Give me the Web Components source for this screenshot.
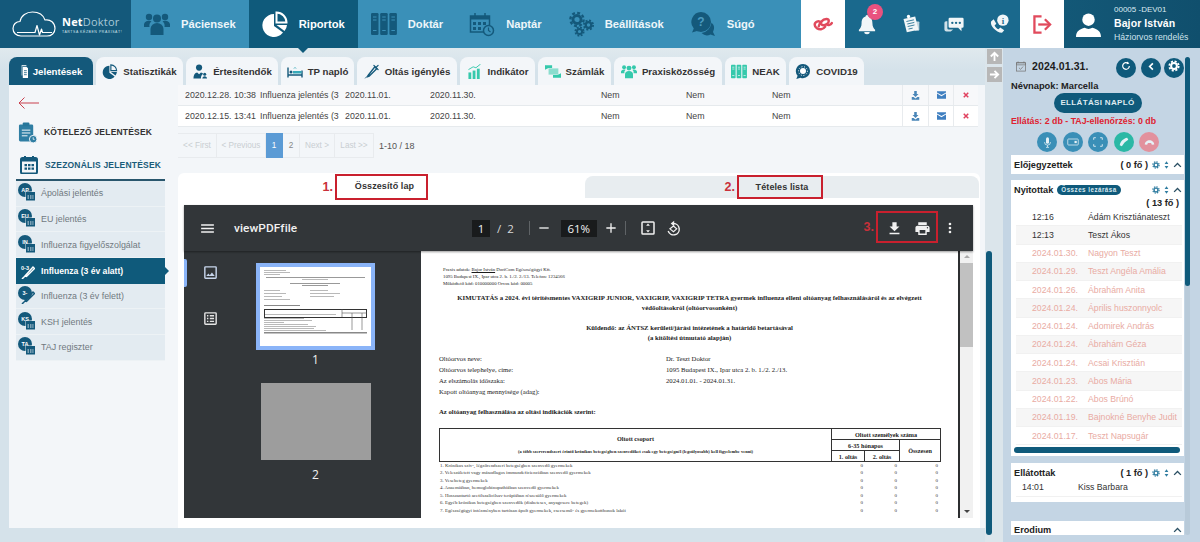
<!DOCTYPE html>
<html lang="hu">
<head>
<meta charset="utf-8">
<title>NetDoktor</title>
<style>
    html, body { margin: 0; height: 542px; overflow: hidden; background: #d5e2ea; font-family: "Liberation Sans", Arial, sans-serif; }
</style>
</head>
<body>
<nd-app>
    <nd-header slot="header"></nd-header>

    <nd-tabs slot="tabs">
        <nd-tab icon="docs" w="84" active>Jelentések</nd-tab>
        <nd-tab icon="pie" w="87">Statisztikák</nd-tab>
        <nd-tab icon="person" w="92">Értesítendők</nd-tab>
        <nd-tab icon="bed" w="73">TP napló</nd-tab>
        <nd-tab icon="syringe" w="100">Oltás igénylés</nd-tab>
        <nd-tab icon="bars" w="75" teal>Indikátor</nd-tab>
        <nd-tab icon="bill" w="73" teal>Számlák</nd-tab>
        <nd-tab icon="users" w="108" teal>Praxisközösség</nd-tab>
        <nd-tab icon="binders" w="61" teal>NEAK</nd-tab>
        <nd-tab icon="virus" w="75">COVID19</nd-tab>
    </nd-tabs>

    <nd-sidemenu slot="menu"></nd-sidemenu>

    <div slot="content">
        <nd-report-table></nd-report-table>
        <nd-pager></nd-pager>
        <nd-pdf-card></nd-pdf-card>
    </div>

    <nd-gutter slot="gutter"></nd-gutter>
    <nd-sidebar slot="sidebar"></nd-sidebar>
</nd-app>

<script>
const ICONS = {
    cloud: ['0 0 44 26', `<g fill="none" stroke="currentColor" stroke-width="1.2" stroke-linejoin="round"><path d="M9 25C4 25 1 21.500 1 17.500 1 13.500 4 10.500 8 10.500 9 4.500 14.500 1 20.500 1 27 1 31.500 4.500 33 9 38.500 8 43 12 43 17.500 43 22 39.500 25 35 25Z"/><path d="M5 21.500H23L25 14.500 27.500 24 29.500 18 30.500 21.500H40"/></g>`],
    users: ['0 0 26 24', `<circle cx="13" cy="6.500" r="4"/><circle cx="5" cy="5" r="3.200"/><circle cx="21" cy="5" r="3.200"/><path d="M6.500 23v-6a6.500 6 0 0 1 13 0v6z"/><path d="M0 15v-3a5 4 0 0 1 7.500-2.700 6 6 0 0 0-2 5.700z"/><path d="M26 15v-3a5 4 0 0 0-7.500-2.700 6 6 0 0 1 2 5.700z"/>`],
    pie: ['0 0 26 26', `<path d="M12 3A11.500 11.500 0 1 0 21 21.500L12 15z"/><path d="M14.500 1.500A10 10 0 0 1 24.500 11.500H14.500z" fill="none" stroke="currentColor" stroke-width="2"/><path d="M14.500 14H25A11 11 0 0 1 22.500 20z"/>`],
    binders: ['0 0 26 24', `<g><rect x="0" y="1" width="7.500" height="22" rx="1.200"/><rect x="9.200" y="1" width="7.500" height="22" rx="1.200"/><rect x="18.400" y="1" width="7.500" height="22" rx="1.200"/></g><g fill="none" stroke="var(--cut,#3a90b8)" stroke-width="1.100"><path d="M2 5h3.500M2 8h3.500M2 18.500h3.500M11.200 5h3.500M11.200 8h3.500M11.200 18.500h3.500M20.400 5h3.500M20.400 8h3.500M20.400 18.500h3.500"/></g>`],
    calclock: ['0 0 26 26', `<g fill="none" stroke="currentColor" stroke-width="1.500"><path d="M15 21H1.500V5h19v9"/><path d="M6 2v5M16 2v5"/><circle cx="19.500" cy="19.500" r="5"/><path d="M19.500 16.500v3l2 1.500" stroke-width="1.200"/></g><path d="M1.500 5h19v3.500h-19z"/><path d="M4 11h3v3H4zM9 11h3v3H9zM14 11h3v3h-3zM4 16h3v3H4zM9 16h3v3H9z"/>`],
    gears: ['0 0 26 26', `<g fill="none" stroke="currentColor"><circle cx="9" cy="8.500" r="4" stroke-width="2.800"/><circle cx="9" cy="8.500" r="6.600" stroke-width="2.400" stroke-dasharray="2.900 2.280"/><circle cx="20.500" cy="14" r="2.800" stroke-width="2.200"/><circle cx="20.500" cy="14" r="4.600" stroke-width="1.800" stroke-dasharray="2 1.610"/><circle cx="11.500" cy="20.500" r="2.600" stroke-width="2"/><circle cx="11.500" cy="20.500" r="4.200" stroke-width="1.700" stroke-dasharray="1.900 1.400"/></g>`],
    help: ['0 0 26 26', `<path d="M11 1a10 10 0 0 1 0 20c-1.500 0-3-.300-4-.9L2 21.500l1.800-4A10 10 0 0 1 11 1z"/><path d="M21.500 11.500a8 8 0 0 1 1.500 9.500l2 4-4.500-1.500a8 8 0 0 1-9-1.500 11.500 11.500 0 0 0 10-10.500z"/><text x="11" y="15" text-anchor="middle" font-size="12" font-family="Liberation Sans" fill="#4b9bc0">?</text>`],
    clover: ['0 0 22 14', `<g fill="none" stroke="currentColor" stroke-width="2.600" stroke-linecap="round"><path d="M8.500 5.500C6 3 1.800 4.500 1.800 7.800c0 3 3.700 5 6.700 4.700 2-.2 3.500-1.500 4.300-2.700"/><path d="M6 9.500C6.500 6 10 2 14 1.800c3.500-.2 3 3.700 .5 5.200-2 1.200-4.500 1.300-5.500 .5"/><path d="M14.500 7.500c1.500 1 4 .5 5.200-1.500"/></g>`],
    bell: ['0 0 20 24', `<path d="M10 2a1.600 1.600 0 0 1 1.600 1.700C15 4.600 16 8 16 11c0 4 1.500 6 3 7.500v1.500H1v-1.500C2.500 17 4 15 4 11c0-3 1-6.400 4.400-7.300A1.600 1.600 0 0 1 10 2z"/><path d="M7 21h6a3 2.500 0 0 1-6 0z"/>`],
    note: ['0 0 24 24', `<path d="M3 6l14-3 4 16-14 3z"/><circle cx="9" cy="3" r="2" fill="#fff"/><path d="M6.500 9l9-2M7.500 12l9-2M8 15l9-2M9 18l5-1" stroke="#1b6a8e" stroke-width="1" fill="none"/><rect x="16" y="9" width="6" height="11" rx="1" opacity=".75"/>`],
    chat: ['0 0 24 20', `<path d="M7 2h15a1.500 1.500 0 0 1 1.500 1.500v9A1.500 1.500 0 0 1 22 14h-1v4l-4-4H7a1.500 1.500 0 0 1-1.500-1.500v-9A1.500 1.500 0 0 1 7 2z"/><path d="M4 6v8.500A1.500 1.500 0 0 0 5.500 16H11l-3 2.500H3A2.500 2.500 0 0 1 .5 16V8A2 2 0 0 1 2.500 6z" opacity=".85"/><g fill="#1b6a8e"><circle cx="10" cy="8" r="1.400"/><circle cx="14.500" cy="8" r="1.400"/><circle cx="19" cy="8" r="1.400"/></g>`],
    phoneinfo: ['0 0 24 24', `<path d="M3.500 8.500l3-2.500 3 5-2 2c1 2 2.500 3.500 4.500 4.500l2-2 4.500 3-2.500 3C9 21 2 13 3.500 8.500z"/><circle cx="17" cy="7" r="6.500"/><text x="17" y="11" text-anchor="middle" font-size="10" font-weight="bold" font-family="Liberation Serif" fill="#1b6a8e">i</text>`],
    logout: ['0 0 20 20', `<g fill="none" stroke="currentColor" stroke-width="2.400"><path d="M9 1.500H1.500v17H9"/><path d="M5.500 10H17" /><path d="M12.500 4.500L18 10l-5.500 5.500"/></g>`],
    avatar: ['0 0 26 26', `<circle cx="13" cy="8" r="6.500"/><path d="M0 26c0-6 4-8 9-9.500 2.500 1.500 5.500 1.500 8 0 5 1.500 9 3.500 9 9.500z"/>`],
    docs: ['0 0 10 16', `<path d="M2 0h6v1H3v12H2z" opacity=".8"/><path d="M3.500 2H8l2 2v12H3.500z"/><path d="M5 7h3.500M5 9.500h3.500M5 12h3.500" stroke="#145e80" stroke-width="1" fill="none"/>`],
    person: ['0 0 16 16', `<circle cx="7" cy="3.800" r="3.300"/><path d="M1 15.500c0-4 1.500-6 4-6.500l2 2 2-2c1 .2 2 .8 2.500 1.500-1.500 1-2.500 2.500-2.500 5z"/><path d="M10.500 15.500c0-1.500 1-2.500 2.500-2.500s2.500 1 2.500 2.500z"/><circle cx="13" cy="11" r="1.600"/>`],
    bed: ['0 0 16 14', `<path d="M1 3v10M15 6v7M1 10.500h14" stroke="currentColor" stroke-width="1.400" fill="none"/><circle cx="4" cy="7.500" r="1.500"/><path d="M6 9V6.500h8.500V9z" fill="#36a9b8"/><path d="M7 4l1-1 1 1" stroke="#36a9b8" fill="none"/>`],
    syringe: ['0 0 16 16', `<g stroke="currentColor" fill="none" stroke-linecap="round"><path d="M1 15l4-4" stroke-width="1"/><path d="M4 12L11 3l2 2-8 8-1.500.5z" stroke-width="1.500"/><path d="M10 1.500l4.500 4.500M12.500 3.500l2-2" stroke-width="1.300"/></g>`],
    bars: ['0 0 16 16', `<rect x="1" y="9" width="3" height="7"/><rect x="5.500" y="7" width="3" height="9"/><rect x="10" y="5" width="3" height="11"/><path d="M1 6l5-3 3 1 5-4" stroke="currentColor" fill="none"/>`],
    bill: ['0 0 18 16', `<rect x="4" y="4.500" width="11" height="7" opacity=".55"/><path d="M0 1h8v3H1zM18 15h-9v-3h8z"/><path d="M0 1l4 3-4 2zM18 15l-4-3 4-2z"/>`],
    virus: ['0 0 18 18', `<path d="M9 0a8.500 8.500 0 0 1 0 17c-1 0-2-.200-3-.600L1 18l1.500-4A8.500 8.500 0 0 1 9 0z"/><circle cx="9" cy="8.500" r="3.600" fill="#fff"/><circle cx="9" cy="8.500" r="5.300" fill="none" stroke="#fff" stroke-width="1.200" stroke-dasharray="1.200 2"/>`],
    clipclock: ['0 0 20 22', `<rect x="1" y="2.500" width="15" height="18" rx="1.500"/><rect x="5" y="0.500" width="7" height="4" rx="1" fill="#27779b"/><path d="M4 8.500h9M4 11.500h9M4 14.500h6" stroke="#fff" fill="none"/><circle cx="16" cy="18" r="4" fill="#2f7ea3" stroke="#f3f6f9"/><path d="M16 16v2.200h1.500" stroke="#fff" stroke-width=".8" fill="none"/>`],
    calendar: ['0 0 18 18', `<path d="M4 0h2v3H4zM12 0h2v3h-2z"/><rect x="1" y="2" width="16" height="15.500" rx="1.500" fill="none" stroke="currentColor" stroke-width="2"/><path d="M1 2h16v3.500H1z"/><path d="M4.500 8h2.500v2.200H4.500zM8 8h2.500v2.200H8zM11.500 8H14v2.200h-2.500zM4.500 11.500h2.500v2.200H4.500zM8 11.500h2.500v2.200H8zM11.500 11.500H14v2.200h-2.500z"/>`],
    back: ['0 0 21 12', `<path d="M21 6H1M6.500.500L1 6l5.500 5.500" fill="none" stroke="currentColor" stroke-width="1"/>`],
    tray: ['0 0 12 12', `<path d="M4.300 0h3.400v4h2.300L6 8 2 4h2.300zM1 8h2.500L6 10l2.500-2H11v3.500H1z"/>`],
    mail: ['0 0 12 10', `<path d="M0 0h12v1.500L6 5 0 1.500z"/><path d="M0 3l6 3.500L12 3v7H0z"/>`],
    cross: ['0 0 8 8', `<path d="M1 1l6 6M7 1L1 7" stroke="currentColor" stroke-width="2" fill="none"/>`],
    menu: ['0 0 24 24', `<path d="M3 18h18v-2H3zM3 13h18v-2H3zM3 6v2h18V6z"/>`],
    plus: ['0 0 24 24', `<path d="M19 13h-6v6h-2v-6H5v-2h6V5h2v6h6z"/>`],
    minus: ['0 0 24 24', `<path d="M19 13H5v-2h14z"/>`],
    fit: ['0 0 24 24', `<path d="M19 3H5a2 2 0 0 0-2 2v14a2 2 0 0 0 2 2h14a2 2 0 0 0 2-2V5a2 2 0 0 0-2-2zm0 16H5V5h14z"/><path d="M12 6l2.500 3h-5zM12 18l2.500-3h-5z"/>`],
    rotate: ['0 0 24 24', `<g fill="none" stroke="currentColor" stroke-width="2"><path d="M12 5a8 8 0 1 1-7.500 10.500"/><path d="M12 8.500l-5 4 5 4 4.500-4z" stroke-width="1.700"/></g><path d="M13 1v8L8 5z"/>`],
    download: ['0 0 24 24', `<path d="M19 9h-4V3H9v6H5l7 7 7-7zM5 18v2h14v-2z"/>`],
    print: ['0 0 24 24', `<path d="M19 8H5c-1.660 0-3 1.340-3 3v6h4v4h12v-4h4v-6c0-1.660-1.340-3-3-3zm-3 11H8v-5h8zm3-7c-.550 0-1-.450-1-1s.450-1 1-1 1 .450 1 1-.450 1-1 1zm-1-9H6v4h12z"/>`],
    dots: ['0 0 24 24', `<path d="M12 8a2 2 0 1 0 0-4 2 2 0 0 0 0 4zm0 2a2 2 0 1 0 0 4 2 2 0 0 0 0-4zm0 6a2 2 0 1 0 0 4 2 2 0 0 0 0-4z"/>`],
    image: ['0 0 24 24', `<path d="M19 5v14H5V5zm0-2H5a2 2 0 0 0-2 2v14a2 2 0 0 0 2 2h14a2 2 0 0 0 2-2V5a2 2 0 0 0-2-2z"/><path d="M14 12l-3 3.900-2-2.500L6 17h12z"/>`],
    outline: ['0 0 24 24', `<path d="M19 3H5a2 2 0 0 0-2 2v14a2 2 0 0 0 2 2h14a2 2 0 0 0 2-2V5a2 2 0 0 0-2-2zm0 16H5V5h14z"/><path d="M7 7h2v2H7zM11 7h6v2h-6zM7 11h2v2H7zM11 11h6v2h-6zM7 15h2v2H7zM11 15h6v2h-6z"/>`],
    refresh: ['0 0 12 12', `<path d="M10 6a4 4 0 1 1-1.300-3" fill="none" stroke="currentColor" stroke-width="1.400"/><path d="M7.500 0.500L10 3 6.800 4z"/>`],
    chevleft: ['0 0 12 12', `<path d="M7.500 2.500L4 6l3.500 3.500" fill="none" stroke="currentColor" stroke-width="1.800"/>`],
    gear: ['0 0 12 12', `<circle cx="6" cy="6" r="2.900" fill="none" stroke="currentColor" stroke-width="2"/><circle cx="6" cy="6" r="4.700" fill="none" stroke="currentColor" stroke-width="1.800" stroke-dasharray="2.100 1.590"/>`],
    updown: ['0 0 8 12', `<path d="M4 0l3 4.500H1zM4 12L1 7.500h6z"/>`],
    chevup: ['0 0 12 8', `<path d="M1.500 6.500L6 2l4.500 4.500" fill="none" stroke="currentColor" stroke-width="1.800"/>`],
    mic: ['0 0 12 14', `<rect x="4" y="0" width="4" height="8.500" rx="2"/><path d="M2 6.500a4 4 0 0 0 8 0M6 10.500v2.500M4 13.500h4" fill="none" stroke="currentColor"/>`],
    video: ['0 0 16 12', `<rect x="1" y="2" width="14" height="8" rx="1" fill="none" stroke="currentColor"/><rect x="10" y="4.500" width="3" height="3"/>`],
    full: ['0 0 14 14', `<path d="M1 4V1h3M10 1h3v3M13 10v3h-3M4 13H1v-3" fill="none" stroke="currentColor" stroke-width="1.200"/>`],
    phone: ['0 0 14 14', `<path d="M11.500 1l1.500 3-3 2C8.500 7 7 8.500 6 10l-2 3-3-1.500C2 6 6 2 11.500 1z"/>`],
    hangup: ['0 0 14 14', `<path d="M1 9.500C1 6 4 4 7 4s6 2 6 5.500l-3 .5-1-2.500H5L4 10z"/>`],
    datebox: ['0 0 12 12', `<path d="M2.500 0v2M9.500 0v2" stroke="currentColor" fill="none"/><rect x=".6" y="1.500" width="10.800" height="10" fill="none" stroke="currentColor" stroke-width=".9"/><path d="M.6 1.500h10.800v2.500H.6zM3.500 7.500l2 2 3-3.500" fill="none" stroke="currentColor" stroke-width=".9"/>`]
}

// small bubble with a label + calendar, used in the left menu
function menuGlyph(label, kind) {
    const tail = kind === 'syringe'
        ? `<path d="M7 15l8-9 1.500 1.500-8 8zM4 18l3-3" stroke="currentColor" fill="none" stroke-width="1.500"/>`
        : `<rect x="7.500" y="8.500" width="9.500" height="9" fill="#e3ebf1"/><rect x="8" y="9" width="9" height="8.500" fill="currentColor"/><path d="M9.500 13h1.500M12 13h1.500M14.300 13h1.200M9.500 15h1.500M12 15h1.500M14.300 15h1.200" stroke="#e3ebf1" fill="none"/>`
    const bubble = kind === 'syringe' && label === '0-3' ? '' : `<circle cx="7" cy="7" r="7"/>`
    const colour = bubble ? '#fff' : 'currentColor'
    return `<svg viewBox="0 0 17 18" width="17" height="18" fill="currentColor">${bubble}<text x="7" y="8.800" text-anchor="middle" font-size="5.500" font-weight="bold" font-family="Liberation Sans" fill="${colour}">${label}</text>${tail}</svg>`
}

class NdIcon extends HTMLElement {
    connectedCallback() {
        const name = this.getAttribute('name')
        const w = this.getAttribute('w') || 16
        const h = this.getAttribute('h') || w
        const [box, body] = ICONS[name]
        this.attachShadow({ mode: 'open' })
        this.shadowRoot.innerHTML = `
            <style>
                :host { display: inline-flex; flex: none; width: ${w}px; height: ${h}px; }
                svg { display: block; width: 100%; height: 100%; fill: currentColor; }
            </style>
            <svg viewBox="${box}">${body}</svg>
        `
    }
}
customElements.define('nd-icon', NdIcon)

class NdApp extends HTMLElement {
    constructor() {
        super()
        this.attachShadow({ mode: 'open' })
        this.shadowRoot.innerHTML = `
            <style>
                :host { display: block; width: 1200px; height: 542px; overflow: hidden; }
                .body { display: grid; grid-template-columns: 985px 18px 197px; height: 494px; }
                .left { padding: 9px 0 0 9px; background: linear-gradient(#e0e9ee, #d5e2ea 22px); }
                .panel { display: grid; grid-template-columns: 169px 807px; height: 443px; background: #f3f6f9; }
            </style>
            <slot name="header"></slot>
            <div class="body">
                <div class="left">
                    <slot name="tabs"></slot>
                    <div class="panel">
                        <slot name="menu"></slot>
                        <slot name="content"></slot>
                    </div>
                </div>
                <slot name="gutter"></slot>
                <slot name="sidebar"></slot>
            </div>
        `
    }
}
customElements.define('nd-app', NdApp)

class NdNavItem extends HTMLElement {
    constructor() {
        super()
        const active = this.hasAttribute('active')
        this.attachShadow({ mode: 'open' })
        this.shadowRoot.innerHTML = `
            <style>
                :host { display: flex; align-items: center; gap: 11px; padding: 0 13px; height: 48px; position: relative;
                        font: bold 11.200px "Liberation Sans", Arial, sans-serif; color: #eef6fa; }
                :host([active]) { background: #0f5a7b; color: #fff; }
                :host([active])::after { content: ""; position: absolute; left: 50%; bottom: -5px; margin-left: -5px;
                        border: 5px solid transparent; border-bottom: 0; border-top-color: #0f5a7b; }
                nd-icon { color: ${active ? '#fff' : '#14597b'}; --cut: #3a90b8; }
            </style>
            <nd-icon name="${this.getAttribute('icon')}" w="26" h="26"></nd-icon>
            <slot></slot>
        `
    }
}
customElements.define('nd-nav-item', NdNavItem)

class NdHeader extends HTMLElement {
    constructor() {
        super()
        this.attachShadow({ mode: 'open' })
        this.shadowRoot.innerHTML = `
            <style>
                :host { display: flex; height: 48px; background: #3a90b8; color: #fff; position: relative; z-index: 2; }
                .logo { width: 131px; flex: none; box-sizing: border-box; padding-left: 12px; display: flex; align-items: center; gap: 6px; background: #14597b; }
                .brand { display: flex; flex-direction: column; gap: 2px; margin-top: 1px; }
                .name { font: 11px/13px "Open Sans", sans-serif; letter-spacing: .2px; color: #a9c9d8; }
                .name b { color: #fff; }
                .motto { font: 3.500px/4px "Liberation Sans", sans-serif; letter-spacing: .55px; color: #cfe1ea; white-space: nowrap; }
                nav { display: flex; width: 670px; flex: none; }
                .tile { width: 44px; flex: none; background: #fff; display: flex; align-items: center; justify-content: center; color: #e14a5c; }
                .tools { width: 175px; flex: none; display: grid; grid-template-columns: repeat(4, 1fr); background: #1a698d; }
                .tool { display: flex; align-items: center; justify-content: center; position: relative; color: #f1f6f8; }
                .badge { position: absolute; left: 22px; top: 4px; width: 16px; height: 16px; border-radius: 50%; background: #e9527f;
                         font: bold 8px/16px "Liberation Sans", sans-serif; text-align: center; color: #fff; }
                .user { flex: 1; display: flex; align-items: center; gap: 13px; padding-left: 12px; background: linear-gradient(90deg, #135877, #104f6d); }
                .who { display: flex; flex-direction: column; font-family: "Liberation Sans", sans-serif; white-space: nowrap; }
                .who span { font-size: 8px; line-height: 10px; color: #dcebf2; }
                .who b { font-size: 10.500px; line-height: 14px; margin: 1px 0; letter-spacing: .1px; }
                .who i { font-style: normal; font-size: 8.700px; line-height: 12px; color: #cfe2ec; }
            </style>
            <div class="logo">
                <nd-icon name="cloud" w="44" h="26"></nd-icon>
                <div class="brand">
                    <div class="name"><b>Net</b>Doktor</div>
                    <div class="motto">TARTSA KÉZBEN PRAXISÁT!</div>
                </div>
            </div>
            <nav>
                <nd-nav-item icon="users">Páciensek</nd-nav-item>
                <nd-nav-item icon="pie" active>Riportok</nd-nav-item>
                <nd-nav-item icon="binders">Doktár</nd-nav-item>
                <nd-nav-item icon="calclock">Naptár</nd-nav-item>
                <nd-nav-item icon="gears">Beállítások</nd-nav-item>
                <nd-nav-item icon="help">Súgó</nd-nav-item>
            </nav>
            <div class="tile"><nd-icon name="clover" w="21" h="14"></nd-icon></div>
            <div class="tools">
                <div class="tool"><nd-icon name="bell" w="18" h="22"></nd-icon><span class="badge">2</span></div>
                <div class="tool"><nd-icon name="note" w="20" h="20"></nd-icon></div>
                <div class="tool"><nd-icon name="chat" w="20" h="17"></nd-icon></div>
                <div class="tool"><nd-icon name="phoneinfo" w="21" h="21"></nd-icon></div>
            </div>
            <div class="tile"><nd-icon name="logout" w="19" h="19"></nd-icon></div>
            <div class="user">
                <nd-icon name="avatar" w="25" h="25"></nd-icon>
                <div class="who">
                    <span>00005 -DEV01</span>
                    <b>Bajor István</b>
                    <i>Háziorvos rendelés</i>
                </div>
            </div>
        `
    }
}
customElements.define('nd-header', NdHeader)

class NdTabs extends HTMLElement {
    constructor() {
        super()
        this.attachShadow({ mode: 'open' })
        this.shadowRoot.innerHTML = `
            <style>:host { display: flex; gap: 3px; height: 28px; }</style>
            <slot></slot>
        `
    }
}
customElements.define('nd-tabs', NdTabs)

class NdTab extends HTMLElement {
    constructor() {
        super()
        this.attachShadow({ mode: 'open' })
        const colour = this.hasAttribute('active') ? '#fff' : this.hasAttribute('teal') ? '#35c9ac' : '#14597b'
        const icon = this.getAttribute('icon')
        const w = icon === 'docs' ? 8 : 16
        this.shadowRoot.innerHTML = `
            <style>
                :host { display: flex; align-items: center; justify-content: center; gap: 5px; box-sizing: border-box; width: ${this.getAttribute('w')}px;
                        height: 28px; border-radius: 8px 8px 0 0; background: #f3f6f9; color: #333;
                        font: bold 9.700px "Liberation Sans", Arial, sans-serif; white-space: nowrap; }
                :host([active]) { background: #14597b; color: #fff; }
                nd-icon { color: ${colour}; --cut: #f3f6f9; }
            </style>
            <nd-icon name="${icon}" w="${w}" h="15"></nd-icon>
            <slot></slot>
        `
    }
}
customElements.define('nd-tab', NdTab)

class NdSidemenu extends HTMLElement {
    constructor() {
        super()
        const items = [
            ['Ápolási jelentés', 'AP', 'cal'],
            ['EU jelentés', 'EU', 'cal'],
            ['Influenza figyelőszolgálat', 'IN', 'cal'],
            ['Influenza (3 év alatt)', '0-3', 'syringe', true],
            ['Influenza (3 év felett)', '3-', 'syringe'],
            ['KSH jelentés', 'KS', 'cal'],
            ['TAJ regiszter', 'TA', 'cal']
        ]
        this.attachShadow({ mode: 'open' })
        this.shadowRoot.innerHTML = `
            <style>
                :host { display: block; padding: 0 13px 0 7px; font-family: "Liberation Sans", Arial, sans-serif; }
                .back { display: flex; align-items: center; height: 36px; padding-left: 2px; color: #c9414f; }
                .head { display: flex; align-items: center; gap: 7px; height: 22px; padding-left: 2px; font-size: 8.500px; font-weight: bold; letter-spacing: .2px; color: #333; white-space: nowrap; }
                .head.open { color: #1a5c7a; margin-top: 7px; height: 29px; padding-left: 4px; border-bottom: 2px solid #29566d; }
                .item { display: flex; align-items: center; gap: 6px; height: 25.700px; box-sizing: border-box; padding-left: 2px; position: relative;
                        background: #e3ebf1; border-bottom: 1px solid #edf2f5; font-size: 8.900px; color: #70797f; white-space: nowrap; }
                .item svg { color: #14597b; flex: none; margin-top: -2px; }
                .item.on { background: #0f5a7b; color: #fff; font-weight: bold; font-size: 8.600px; border: 0; }
                .item.on svg { color: #fff; }
                .item.on::after { content: ""; position: absolute; right: -4px; top: 50%; margin-top: -4px; border: 4px solid transparent; border-right: 0; border-left-color: #0f5a7b; }
            </style>
            <div class="back"><nd-icon name="back" w="21" h="12"></nd-icon></div>
            <div class="head"><nd-icon name="clipclock" w="19" h="21" style="color:#2f7ea3"></nd-icon>KÖTELEZŐ JELENTÉSEK</div>
            <div class="head open"><nd-icon name="calendar" w="18" h="18" style="color:#14597b"></nd-icon>SZEZONÁLIS JELENTÉSEK</div>
            ${items.map(([text, label, kind, on]) => `
                <div class="item ${on ? 'on' : ''}">${menuGlyph(label, kind)}<span>${text}</span></div>`).join('')}
        `
    }
}
customElements.define('nd-sidemenu', NdSidemenu)

class NdReportTable extends HTMLElement {
    constructor() {
        super()
        const rows = [
            ['2020.12.28. 10:38', 'Influenza jelentés (3', '2020.11.01.', '2020.11.30.'],
            ['2020.12.15. 13:41', 'Influenza jelentés (3', '2020.11.01.', '2020.11.30.']
        ]
        this.attachShadow({ mode: 'open' })
        this.shadowRoot.innerHTML = `
            <style>
                :host { display: block; width: 800px; font: 8.800px "Liberation Sans", Arial, sans-serif; color: #444; }
                .row { display: grid; grid-template-columns: 75px 85px 85px 171px 85px 86px 130px 26px 25px 25px; height: 21px; padding-left: 7px; align-items: stretch;
                       box-sizing: border-box; background: #f7f8fa; border-bottom: 1px solid #e6eaed; }
                .row:last-child { background: #fff; }
                .row > span { display: flex; align-items: center; white-space: nowrap; overflow: hidden; }
                .act { justify-content: center; border-left: 1px solid #e8ebee; }
            </style>
            ${rows.map(r => `
                <div class="row">
                    ${r.map(c => `<span>${c}</span>`).join('')}
                    <span>Nem</span><span>Nem</span><span>Nem</span>
                    <span class="act"><nd-icon name="tray" w="9" h="9" style="color:#4a86b8"></nd-icon></span>
                    <span class="act"><nd-icon name="mail" w="9" h="8" style="color:#3f7fc0"></nd-icon></span>
                    <span class="act"><nd-icon name="cross" w="6" h="6" style="color:#e0405e"></nd-icon></span>
                </div>`).join('')}
        `
    }
}
customElements.define('nd-report-table', NdReportTable)

class NdPager extends HTMLElement {
    constructor() {
        super()
        this.attachShadow({ mode: 'open' })
        this.shadowRoot.innerHTML = `
            <style>
                :host { display: flex; align-items: center; height: 25px; margin: 6px 0 15px; font: 8.200px "Liberation Sans", Arial, sans-serif; color: #c9ced2; }
                a { display: flex; align-items: center; justify-content: center; box-sizing: border-box; height: 25px; border: 1px solid #e8ebee; border-left-width: 0; }
                a:first-child { border-left-width: 1px; }
                .on { background: #5b9bd5; border-color: #5b9bd5; color: #fff; }
                .num { color: #888; }
                .total { margin-left: 5px; font-size: 9px; color: #555; }
            </style>
            <a style="width:39px">&lt;&lt; First</a>
            <a style="width:49px">&lt; Previous</a>
            <a class="on" style="width:17px">1</a>
            <a class="num" style="width:17px">2</a>
            <a style="width:35px">Next &gt;</a>
            <a style="width:39px">Last &gt;&gt;</a>
            <span class="total">1-10 / 18</span>
        `
    }
}
customElements.define('nd-pager', NdPager)

class NdCallout extends HTMLElement {
    constructor() {
        super()
        this.attachShadow({ mode: 'open' })
        this.shadowRoot.innerHTML = `
            <style>
                :host { position: absolute; box-sizing: border-box; border: 2.500px solid #c9202e; }
                b { position: absolute; right: 100%; top: 50%; margin-right: 4px; transform: translateY(-50%);
                    font: bold 12.500px "Liberation Sans", Arial, sans-serif; color: #c9303a; }
            </style>
            <b>${this.getAttribute('mark')}</b>
        `
    }
}
customElements.define('nd-callout', NdCallout)

class NdPdfCard extends HTMLElement {
    constructor() {
        super()
        this.attachShadow({ mode: 'open' })
        this.shadowRoot.innerHTML = `
            <style>
                :host { display: block; position: relative; width: 802px; height: 355px; background: #fff; box-sizing: border-box; padding: 0 7px 0 6px; border-radius: 6px 6px 0 0;
                        font-family: "Liberation Sans", Arial, sans-serif; }
                .tabs { display: grid; grid-template-columns: 401px 394px; height: 32px; }
                .tabs div { display: flex; align-items: center; justify-content: center; height: 25px; font-size: 9px; font-weight: bold; color: #333; letter-spacing: .1px; }
                .tabs .off { margin-top: 3px; height: 22px; background: #e8edf0; border-radius: 8px 8px 0 0; }
            </style>
            <div class="tabs">
                <div>Összesítő lap</div>
                <div class="off">Tételes lista</div>
            </div>
            <nd-pdf-viewer></nd-pdf-viewer>
            <nd-callout mark="1." style="left:157px;top:1px;width:93px;height:26px"></nd-callout>
            <nd-callout mark="2." style="left:559px;top:2px;width:86px;height:24px"></nd-callout>
            <nd-callout mark="3." style="left:698px;top:38px;width:62px;height:32px"></nd-callout>
        `
    }
}
customElements.define('nd-pdf-card', NdPdfCard)

class NdPdfViewer extends HTMLElement {
    constructor() {
        super()
        this.attachShadow({ mode: 'open' })
        this.shadowRoot.innerHTML = `
            <style>
                :host { display: block; width: 789px; height: 313px; background: #323639; color: #f1f1f1; font-family: "Open Sans", Roboto, sans-serif; }
                .bar { display: flex; align-items: center; height: 46px; box-shadow: 0 1px 2px #0006; position: relative; }
                .bar nd-icon { color: #f1f1f1; }
                .title { font: 500 11.800px Roboto, sans-serif; margin-left: 18px; width: 238px; letter-spacing: .1px; }
                .input { background: #191b1c; height: 17px; line-height: 17px; text-align: center; font-size: 11.500px; }
                .sep { width: 1px; height: 14px; background: #5f6366; }
                .muted { font-size: 11.500px; color: #d8d8d8; white-space: nowrap; }
                .view { display: grid; grid-template-columns: 237px 537px 2px 13px; height: 267px; }
                .side { display: grid; grid-template-columns: 54px 1fr; background: #323639; }
                .rail { position: relative; padding: 13px 0 0 18px; display: flex; flex-direction: column; gap: 29px; color: #c8d6ec; }
                .rail::before { content: ""; position: absolute; left: 0; top: 8px; width: 3px; height: 28px; background: #8ab4f8; border-radius: 0 2px 2px 0; }
                .thumbs { padding: 12px 0 0 18px; display: flex; flex-direction: column; align-items: flex-start; font-size: 12px; }
                .thumb1 { display: block; width: 111px; height: 79px; border: 4px solid #8ab4f8; background: #fff; }
                .thumb2 { width: 110px; height: 77px; margin: 15px 0 0 5px; background: #9d9d9d; }
                .num { width: 119px; text-align: center; height: 18px; line-height: 20px; margin-bottom: 0; }
                .rule { background: #2c2e30; }
                .scroll { background: #f1f1f1; display: flex; flex-direction: column; align-items: center; color: #555; }
                .scroll u { display: block; width: 13px; height: 84px; margin-top: 5px; background: #c1c1c1; }
                .arrow { width: 0; height: 0; border: 3.500px solid transparent; }
            </style>
            <div class="bar">
                <nd-icon name="menu" w="17" h="17" style="margin-left:15px"></nd-icon>
                <span class="title">viewPDFfile</span>
                <span class="input" style="width:18px">1</span>
                <span class="muted" style="margin:0 15px 0 7px">/&nbsp; 2</span>
                <span class="sep"></span>
                <nd-icon name="minus" w="16" h="16" style="margin:0 6px"></nd-icon>
                <span class="input" style="width:36px;margin-left:3px">61%</span>
                <nd-icon name="plus" w="16" h="16" style="margin:0 6px"></nd-icon>
                <span class="sep"></span>
                <nd-icon name="fit" w="18" h="18" style="margin-left:13px"></nd-icon>
                <nd-icon name="rotate" w="17" h="17" style="margin-left:8px"></nd-icon>
                <nd-icon name="download" w="17" h="17" style="margin-left:204px"></nd-icon>
                <nd-icon name="print" w="17" h="17" style="margin-left:11px"></nd-icon>
                <nd-icon name="dots" w="16" h="16" style="margin-left:11px"></nd-icon>
            </div>
            <div class="view">
                <div class="side">
                    <div class="rail">
                        <nd-icon name="image" w="17" h="17"></nd-icon>
                        <nd-icon name="outline" w="17" h="17" style="color:#e4e4e4"></nd-icon>
                    </div>
                    <div class="thumbs">
                        <svg class="thumb1" viewBox="0 0 111 79">
                            <g fill="#b9b9b9">
                                <rect x="4" y="3" width="22" height="1"/><rect x="4" y="5" width="26" height="1"/><rect x="4" y="7" width="16" height="1"/>
                                <rect x="6" y="10" width="99" height="1" fill="#999"/><rect x="42" y="12" width="26" height="1"/>
                                <rect x="30" y="16" width="50" height="1" fill="#999"/><rect x="42" y="18" width="26" height="1" fill="#999"/>
                                <rect x="4" y="23" width="16" height="1"/><rect x="50" y="23" width="18" height="1"/>
                                <rect x="4" y="26" width="22" height="1"/><rect x="50" y="26" width="30" height="1"/>
                                <rect x="4" y="29" width="18" height="1"/><rect x="50" y="29" width="24" height="1"/>
                                <rect x="4" y="32" width="26" height="1"/><rect x="4" y="38" width="36" height="1" fill="#888"/>
                                <rect x="4" y="47" width="72" height="1"/><rect x="4" y="51" width="40" height="1"/><rect x="4" y="53" width="48" height="1"/><rect x="4" y="55" width="20" height="1"/><rect x="4" y="57" width="44" height="1"/><rect x="4" y="59" width="52" height="1"/><rect x="4" y="61" width="50" height="1"/><rect x="4" y="63" width="62" height="1"/>
                            </g>
                            <rect x="4.500" y="42.500" width="102" height="8" fill="none" stroke="#333"/>
                            <path d="M82 42v8M92 46v17M102 46v17M82 46h25" stroke="#555" fill="none" stroke-width=".6"/>
                            <rect x="4" y="65" width="103" height="1.500" fill="#888"/>
                        </svg>
                        <div class="num">1</div>
                        <div class="thumb2"></div>
                        <div class="num" style="margin-top:5px">2</div>
                    </div>
                </div>
                <nd-pdf-page></nd-pdf-page>
                <div class="rule"></div>
                <div class="scroll">
                    <div class="arrow" style="border-bottom-color:#aaa;border-top:0;margin-top:4px"></div>
                    <u></u>
                    <div class="arrow" style="border-top-color:#444;border-bottom:0;margin-top:auto;margin-bottom:5px"></div>
                </div>
            </div>
        `
    }
}
customElements.define('nd-pdf-viewer', NdPdfViewer)

class NdPdfPage extends HTMLElement {
    constructor() {
        super()
        const lines = [
            'Krónikus szív-, légzőrendszeri betegségben szenvedő gyermekek',
            'Veleszületett vagy másodlagos immundeficienciában szenvedő gyermekek',
            'Vesebeteg gyermekek',
            'Anaemiában, hemoglobinopathiában szenvedő gyermekek',
            'Hosszantartó acetilszalicilsav terápiában részesülő gyermekek',
            'Egyéb krónikus betegségben szenvedők (diabeteses, anyagcsere betegek)',
            'Egészségügyi intézményben tartósan ápolt gyermekek, csecsemő- és gyermekotthonok lakói'
        ]
        this.attachShadow({ mode: 'open' })
        this.shadowRoot.innerHTML = `
            <style>
                :host { display: block; overflow: hidden; background: #fff; color: #1b1b1b; font-family: "Liberation Serif", "Times New Roman", serif; padding-top: 15px; }
                .meta { padding-left: 22px; font-size: 4.800px; line-height: 7px; }
                .title { margin-top: 6px; text-align: center; font-weight: bold; font-size: 6.770px; line-height: 10px; white-space: nowrap; }
                .send { margin-top: 10px; text-align: center; font-weight: bold; font-size: 6.700px; line-height: 10px; }
                .fields { margin: 10px 0 9px 18px; display: grid; grid-template-columns: 227px 1fr; font-size: 6.700px; line-height: 11px; }
                .use { margin: 0 0 11px 18px; font-size: 6.700px; line-height: 11px; font-weight: bold; }
                table { margin-left: 18px; width: 502px; height: 34px; border-collapse: collapse; table-layout: fixed; font-size: 6.200px; font-weight: bold; text-align: center; }
                td { border: 1px solid #333; padding: 0; line-height: 7px; }
                .sub { font-size: 4.500px; display: block; margin-top: 6px; white-space: nowrap; }
                .items { margin-left: 19px; width: 502px; font-size: 4.900px; color: #333; }
                .items div { display: grid; grid-template-columns: 390px 34px 34px 41px; height: 7.450px; line-height: 7.450px; white-space: nowrap; }
                .items span:not(:first-child) { text-align: right; padding-right: 1px; }
            </style>
            <div class="meta">
                Praxis adatok: <u>Bajor István</u> DoriCom Egészségügyi Kft.<br>
                1095 Budapest IX., Ipar utca 2. b. 1./2. 2./13. Telefon: 1234566<br>
                Működtető kód: 010000000 Orvos kód: 00005
            </div>
            <div class="title">
                KIMUTATÁS a 2024. évi térítésmentes VAXIGRIP JUNIOR, VAXIGRIP, VAXIGRIP TETRA gyermek influenza elleni oltóanyag felhasználásáról és az elvégzett<br>
                védőoltásokról (oltóorvosonként)
            </div>
            <div class="send">
                Küldendő: az ÁNTSZ kerületi/járási intézetének a határidő betartásával<br>
                (a kitöltési útmutató alapján)
            </div>
            <div class="fields">
                <span>Oltóorvos neve:</span><span>Dr. Teszt Doktor</span>
                <span>Oltóorvos telephelye, címe:</span><span>1095 Budapest IX., Ipar utca 2. b. 1./2. 2./13.</span>
                <span>Az elszámolás időszaka:</span><span>2024.01.01. - 2024.01.31.</span>
                <span>Kapott oltóanyag mennyisége (adag):</span><span></span>
            </div>
            <div class="use">Az oltóanyag felhasználása az oltási indikációk szerint:</div>
            <table>
                <colgroup><col style="width:392px"><col style="width:33px"><col style="width:35px"><col></colgroup>
                <tr><td rowspan="3">Oltott csoport<span class="sub">(a több szervrendszert érintő krónikus betegségben szenvedőket csak egy betegségnél (legsúlyosabb) kell figyelembe venni)</span></td><td colspan="3">Oltott személyek száma</td></tr>
                <tr><td colspan="2">6-35 hónapos</td><td rowspan="2">Összesen</td></tr>
                <tr><td>1. oltás</td><td>2. oltás</td></tr>
            </table>
            <div class="items">
                ${lines.map((t, i) => `<div><span>${i + 1}. ${t}</span><span>0</span><span>0</span><span>0</span></div>`).join('')}
            </div>
        `
    }
}
customElements.define('nd-pdf-page', NdPdfPage)

class NdGutter extends HTMLElement {
    constructor() {
        super()
        this.attachShadow({ mode: 'open' })
        this.shadowRoot.innerHTML = `
            <style>
                :host { display: flex; flex-direction: column; align-items: flex-start; padding-top: 1px; background: #dbe5eb; }
                .btn { width: 15px; height: 15px; margin: 0 0 3px 2px; background: #b7b7b7; display: flex; align-items: center; justify-content: center; color: #fff; }
                svg { display: block; }
                u { display: block; width: 6px; height: 284px; margin: 166px 0 0 1px; background: #0f5a7b; border-radius: 3px; }
            </style>
            <div class="btn"><svg width="11" height="11" viewBox="0 0 12 12"><path d="M6 11V2M2 6l4-4 4 4" fill="none" stroke="currentColor" stroke-width="2"/></svg></div>
            <div class="btn"><svg width="11" height="11" viewBox="0 0 12 12"><path d="M1 6h9M6 2l4 4-4 4" fill="none" stroke="currentColor" stroke-width="2"/></svg></div>
            <u></u>
        `
    }
}
customElements.define('nd-gutter', NdGutter)

class NdPanel extends HTMLElement {
    constructor() {
        super()
        this.attachShadow({ mode: 'open' })
        const count = this.getAttribute('count')
        const tools = this.hasAttribute('tools') ? `
            <nd-icon name="gear" w="8" h="8" style="color:#2f7ca0"></nd-icon>
            <nd-icon name="updown" w="5" h="8" style="color:#2f7ca0"></nd-icon>` : ''
        this.shadowRoot.innerHTML = `
            <style>
                :host { display: flow-root; background: #fff; font: 9.200px "Liberation Sans", Arial, sans-serif; color: #222; }
                .head { display: flex; align-items: center; gap: 4px; height: 19px; padding: 0 2px 0 3px; }
                .title { font-weight: bold; flex: none; }
                .count { margin-left: auto; font-weight: bold; white-space: nowrap; }
            </style>
            <div class="head">
                <span class="title">${this.getAttribute('title')}</span>
                <slot name="extra"></slot>
                <span class="count">${count || ''}</span>
                ${tools}
                <nd-icon name="chevup" w="9" h="6" style="color:#2a4f63"></nd-icon>
            </div>
            <slot></slot>
        `
    }
}
customElements.define('nd-panel', NdPanel)

class NdPatientList extends HTMLElement {
    constructor() {
        super()
        this.attachShadow({ mode: 'open' })
    }
    connectedCallback() {
        const rows = JSON.parse(this.getAttribute('rows'))
        const pad = this.getAttribute('pad') || 16
        this.shadowRoot.innerHTML = `
            <style>
                :host { display: block; margin: 0 2px 0 5px; font: 8.700px "Liberation Sans", Arial, sans-serif; color: #333; }
                .row { display: grid; grid-template-columns: 56px 1fr; height: 18.250px; align-items: center; padding-left: ${pad}px; box-sizing: border-box; background: #fff; border-bottom: 1px solid #f1f1f1; white-space: nowrap; }
                .row:nth-child(odd) { background: #f6f6f6; }
                .row.old { color: #e9aba3; }
            </style>
            ${rows.map(([t, n]) => `<div class="row ${t.length > 5 ? 'old' : ''}"><span>${t}</span><span>${n}</span></div>`).join('')}
        `
    }
}
customElements.define('nd-patient-list', NdPatientList)

class NdSidebar extends HTMLElement {
    constructor() {
        super()
        const open = [
            ['12:16', 'Ádám Krisztiánateszt'],
            ['12:13', 'Teszt Ákos'],
            ['2024.01.30.', 'Nagyon Teszt'],
            ['2024.01.29.', 'Teszt Angéla Amália'],
            ['2024.01.26.', 'Ábrahám Anita'],
            ['2024.01.24.', 'Április huszonnyolc'],
            ['2024.01.24.', 'Adomirek András'],
            ['2024.01.24.', 'Ábrahám Géza'],
            ['2024.01.24.', 'Acsai Krisztián'],
            ['2024.01.23.', 'Abos Mária'],
            ['2024.01.22.', 'Abos Brúnó'],
            ['2024.01.19.', 'Bajnokné Benyhe Judit'],
            ['2024.01.17.', 'Teszt Napsugár']
        ]
        const done = [['14:01', 'Kiss Barbara']]
        this.attachShadow({ mode: 'open' })
        this.shadowRoot.innerHTML = `
            <style>
                :host { display: flex; gap: 1px; padding: 9px 10px 0 8px; background: #c4d5e4; font-family: "Liberation Sans", Arial, sans-serif; color: #1c1c1c; overflow: hidden; }
                .col { width: 173px; flex: none; }
                .date { display: flex; align-items: center; height: 21px; padding-left: 5px; }
                .date nd-icon:first-child, .date b { margin-top: -3px; }
                .date b { margin-left: 6px; font-size: 10.500px; letter-spacing: .1px; flex: 1; }
                .round { width: 20px; height: 20px; border-radius: 50%; background: #0f5a7b; color: #fff; display: flex; align-items: center; justify-content: center; margin-left: 5px; }
                .round.r2 { margin-left: 3px; }
                .names { font-size: 9.300px; font-weight: bold; line-height: 11px; margin-top: 3px; color: #222; }
                .log { display: block; width: 88px; height: 20px; margin: 1px auto 0; border-radius: 10px; background: #0f5a7b; color: #dfeaf0;
                       font-size: 8px; line-height: 20px; font-weight: bold; text-align: center; letter-spacing: .35px; white-space: nowrap; }
                .alert { margin-top: 3px; font-size: 8.800px; line-height: 11px; font-weight: bold; color: #df2230; white-space: nowrap; }
                .calls { display: flex; justify-content: center; gap: 5.500px; margin: 5px 0 0 1px; height: 20px; }
                .call { width: 20px; height: 20px; border-radius: 50%; display: flex; align-items: center; justify-content: center; background: #3a8fb7; color: #e6f1f6; }
                nd-panel { margin-top: 6px; }
                .first { margin-top: 3px; }
                .pill { margin-left: 0; padding: 0 4px; height: 10px; line-height: 10px; border-radius: 5px; background: #0f5a7b; color: #d8e8ef; font-size: 6.300px; font-weight: bold; letter-spacing: .45px; white-space: nowrap; }
                .cnt { font-size: 9.200px; font-weight: bold; text-align: right; padding-right: 5px; line-height: 10px; margin-top: -1px; }
                .hbar { height: 6px; margin: 2px 4px 3px 3px; border-radius: 3px; background: #0f5a7b; }
                .track { width: 5px; flex: none; height: 478px; background: #b8cad9; border-radius: 3px; }
                .track u { display: block; height: 229px; background: #0f5a7b; border-radius: 3px; }
            </style>
            <div class="col">
                <div class="date">
                    <nd-icon name="datebox" w="10" h="11" style="color:#777"></nd-icon>
                    <b>2024.01.31.</b>
                    <div class="round"><nd-icon name="refresh" w="10" h="10"></nd-icon></div>
                    <div class="round"><nd-icon name="chevleft" w="11" h="11"></nd-icon></div>
                    <div class="round r2"><nd-icon name="gear" w="12" h="12"></nd-icon></div>
                </div>
                <div class="names">Névnapok: Marcella</div>
                <div class="log">ELLÁTÁSI NAPLÓ</div>
                <div class="alert">Ellátás: 2 db - TAJ-ellenőrzés: 0 db</div>
                <div class="calls">
                    <div class="call"><nd-icon name="mic" w="9" h="11"></nd-icon></div>
                    <div class="call"><nd-icon name="video" w="12" h="10"></nd-icon></div>
                    <div class="call"><nd-icon name="full" w="10" h="10"></nd-icon></div>
                    <div class="call" style="background:#2bb8a5"><nd-icon name="phone" w="10" h="10"></nd-icon></div>
                    <div class="call" style="background:#e2919d"><nd-icon name="hangup" w="11" h="11"></nd-icon></div>
                </div>
                <nd-panel class="first" title="Előjegyzettek" count="( 0 fő )" tools></nd-panel>
                <nd-panel title="Nyitottak" tools>
                    <span slot="extra" class="pill">Összes lezárása</span>
                    <div class="cnt">( 13 fő )</div>
                    <nd-patient-list rows='${JSON.stringify(open)}'></nd-patient-list>
                    <div class="hbar"></div>
                </nd-panel>
                <nd-panel title="Ellátottak" count="( 1 fő )" tools style="margin-top:7px;padding-bottom:5px">
                    <nd-patient-list rows='${JSON.stringify(done)}' pad="6" style="margin-top:-4px"></nd-patient-list>
                </nd-panel>
                <nd-panel title="Erodium" style="margin-top:19px;height:14px;overflow:hidden"></nd-panel>
            </div>
            <div class="track"><u></u></div>
        `
    }
}
customElements.define('nd-sidebar', NdSidebar)
</script>
</body>
</html>
